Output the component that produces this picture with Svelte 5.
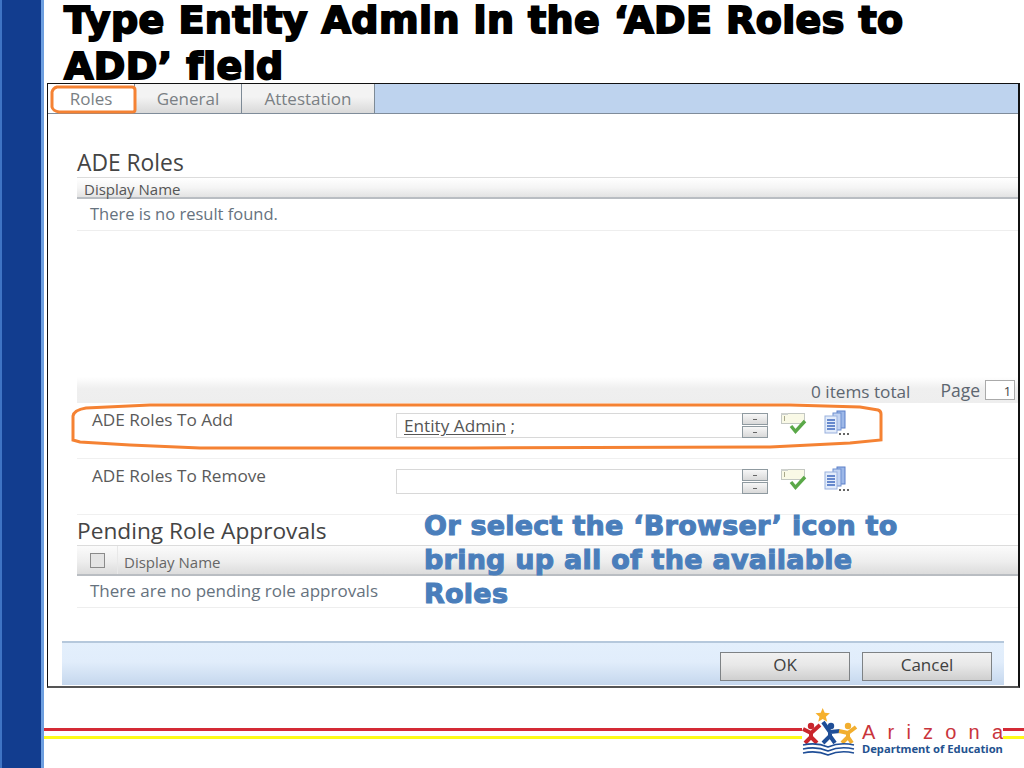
<script>
  const pendingCols = ['Display Name'];
</script>

{#snippet spinner()}
  <span class="spin">
    <span class="spin-btn"><i></i></span>
    <span class="spin-btn"><i></i></span>
  </span>
{/snippet}

{#snippet checkIcon()}
  <svg class="ico-check" width="26" height="24" viewBox="0 0 26 24" aria-hidden="true">
    <rect x="0.5" y="1.5" width="23" height="10" fill="#f9f9e6" stroke="#c4c8c2"/>
    <rect x="0" y="1" width="7" height="2" fill="#cfd2ce"/>
    <rect x="3" y="4" width="1" height="5" fill="#a9a98a"/>
    <path d="M10 14l4.5 5.5L24 9" fill="none" stroke="#5aa848" stroke-width="3.4"/>
  </svg>
{/snippet}

{#snippet browseIcon()}
  <svg class="ico-browse" width="27" height="26" viewBox="0 0 27 26" aria-hidden="true">
    <rect x="13" y="1" width="8" height="17" fill="#9db8e8" stroke="#5b7fc8"/>
    <rect x="9" y="3" width="8" height="17" fill="#c3d4f2" stroke="#6f8fd0"/>
    <rect x="1" y="6" width="12" height="17" fill="#e3ecfa" stroke="#9ab1de"/>
    <path d="M3 10h8M3 13h8M3 16h8M3 19h8" stroke="#3f68bf" stroke-width="1.4"/>
    <path d="M15 24h2M19 24h2M23 24h2" stroke="#666" stroke-width="2"/>
  </svg>
{/snippet}

<div class="slide">
  <aside class="side"></aside>
  <main class="main">
    <h1><span class="l1">Type Entity Admin in the ‘ADE Roles to</span><span class="l2">ADD’ field</span></h1>

    <section class="win">
      <nav class="tabs">
        <span class="tab active">Roles</span>
        <span class="tab general">General</span>
        <span class="tab attest">Attestation</span>
      </nav>

      <div class="body">
        <h2 class="h-roles">ADE Roles</h2>
        <div class="thead"><span>Display Name</span></div>
        <div class="trow first">There is no result found.</div>

        <div class="pager">
          <span class="total">0 items total</span>
          <span class="page">Page</span>
          <span class="pagebox">1</span>
        </div>

        <div class="field add">
          <span class="lbl">ADE Roles To Add</span>
          <div class="input"><span class="val"><u>Entity Admin </u> ;</span>{@render spinner()}</div>
          {@render checkIcon()}
          {@render browseIcon()}
        </div>
        <div class="field rem">
          <span class="lbl">ADE Roles To Remove</span>
          <div class="input"><span class="val"></span>{@render spinner()}</div>
          {@render checkIcon()}
          {@render browseIcon()}
        </div>

        <h2 class="h-pending">Pending Role Approvals</h2>
        <div class="thead tall">
          <span class="cbcell"><i class="cb"></i></span>
          {#each pendingCols as c}<span class="col">{c}</span>{/each}
        </div>
        <div class="trow">There are no pending role approvals</div>

        <footer class="foot">
          <button>OK</button>
          <button>Cancel</button>
        </footer>
      </div>

      <svg class="ring ring-tab" width="90" height="32" viewBox="0 0 90 32" aria-hidden="true">
        <path d="M8 3H83Q86 3 86 6V26Q86 28 83 28L10 28Q4 27 3 23V8Q4 4 8 3Z" fill="none" stroke="#f58233" stroke-width="3"/>
      </svg>
      <svg class="ring ring-add" width="816" height="50" viewBox="0 0 816 50" aria-hidden="true">
        <path d="M3 38L3 14Q4 8 16 6L80 3H720L790 5L808 8Q811 9 811 12V38L780 41L700 45L400 46H130L60 43L10 40Z" fill="none" stroke="#f58233" stroke-width="3"/>
      </svg>

      <p class="note">Or select the ‘Browser’ icon to<br />bring up all of the available<br />Roles</p>
    </section>

    <div class="rule-row">
      <div class="rule"></div>
      <div class="logo">
        <svg width="60" height="48" viewBox="0 0 60 48" aria-hidden="true">
          <path d="M20.7 0l2 4.8 5.2.5-4 3.4 1.3 5.1-4.5-2.7-4.5 2.7 1.3-5.1-4-3.4 5.2-.5z" fill="#f6b02c"/>
          <g fill="none" stroke-width="4" stroke-linejoin="round">
            <path d="M1 21l8 4 9-8M9 24v6M3 35l6-6 6 6" stroke="#c9252c"/>
            <path d="M38 23l-10 1-7-10M28 23v6M21 35l7-7 5 7" stroke="#1f4e97"/>
            <path d="M37 23l9 2 8-6M46 24v6M40 35l6-6 4 6" stroke="#f2ae2e"/>
          </g>
          <circle cx="9" cy="18" r="3.2" fill="#c9252c"/>
          <circle cx="29" cy="18" r="3.2" fill="#1f4e97"/>
          <circle cx="46" cy="18" r="3.2" fill="#f2ae2e"/>
          <path d="M1 37c9-2 18-1 25 2 7-3 17-4 26-2M1 41c9-2 18-1 25 2 7-3 17-4 26-2M1 45c9-2 18-1 25 2 7-3 17-4 26-2" fill="none" stroke="#1f4e97" stroke-width="1.6"/>
        </svg>
        <div class="logotxt">
          <div class="az">Arizona</div>
          <div class="dep">Department of Education</div>
        </div>
      </div>
      <div class="rule end"></div>
    </div>
  </main>
</div>

<style>
  :global(body) { margin: 0; background: #fff; }
  .slide { width: 1024px; height: 768px; display: flex; overflow: hidden; background: #fff; font-family: "Open Sans", "Noto Sans", sans-serif; }
  .side { width: 44px; flex: none; box-sizing: border-box; background: #123d8f; border-left: 2px solid #3f74c4; border-right: 3px solid #6d9fe0; }
  .main { flex: 1; min-width: 0; display: flex; flex-direction: column; }

  h1 { margin: 0 0 0 20px; height: 83px; font: bold 38px "DejaVu Sans", sans-serif; color: #000; -webkit-text-stroke: 1.9px #000; white-space: nowrap; letter-spacing: 0.4px; }
  .l1 { display: block; line-height: 40px; }
  .l2 { display: block; line-height: 34px; margin-top: 9px; }

  .win { position: relative; margin-left: 3px; width: 973px; height: 605px; flex: none; box-sizing: border-box; border: 1px solid #111; border-right-width: 2px; border-bottom: 2px solid #555; display: flex; flex-direction: column; background: #fff; }

  .tabs { height: 30px; flex: none; display: flex; background: #bed3ee; box-sizing: border-box; border-bottom: 1px solid #7f8c9a; }
  .tab { display: flex; align-items: center; justify-content: center; box-sizing: border-box; font-size: 17px; color: #7a7f84; background: linear-gradient(#f3f3f3, #f3f3f3 45%, #d9d9d9); border-right: 1px solid #7d8a96; }
  .tab.active { width: 87px; background: #fff; }
  .tab.general { width: 107px; }
  .tab.attest { width: 133px; }

  .body { flex: 1; display: flex; flex-direction: column; padding-left: 29px; min-height: 0; }
  h2 { margin: 0; font-weight: 400; color: #444; }
  .h-roles { font-size: 22.8px; line-height: 24px; margin: 37px 0 2px; }
  .h-pending { font-size: 22.7px; line-height: 28px; margin-top: 2px; }

  .thead { height: 22px; flex: none; box-sizing: border-box; display: flex; align-items: center; padding: 2px 0 0 7px; font-size: 15px; color: #555; background: linear-gradient(#fff, #f5f5f5 50%, #e3e3e3); border-top: 1px solid #dcdcdc; border-bottom: 2px solid #b9bdc2; }
  .thead.tall { height: 31px; padding: 0; background: linear-gradient(#fbfbfb, #eeeeee 55%, #dcdcdc); }
  .cbcell { width: 41px; height: 100%; display: flex; align-items: center; justify-content: center; border-right: 1px solid #e8e8e8; box-sizing: border-box; }
  .cb { display: block; width: 15px; height: 15px; box-sizing: border-box; border: 1px solid #8a8a8a; background: #e4e4e4; }
  .col { padding: 3px 0 0 6px; color: #666; font-size: 15px; }
  .trow { height: 32px; flex: none; box-sizing: border-box; padding-left: 13px; font-size: 17px; line-height: 30px; color: #66727e; border-bottom: 1px solid #eeeeee; white-space: nowrap; }
  .trow.first { font-size: 16.5px; }

  .pager { margin-top: 146px; height: 26px; flex: none; display: flex; align-items: center; font-size: 17.2px; color: #5d6670; background: linear-gradient(#fff, #efefef 45%, #eeeeee); }
  .total { margin-left: 734px; position: relative; top: 1px; }
  .page { margin-left: 30px; font-size: 17.5px; }
  .pagebox { margin-left: 5px; width: 30px; height: 20px; box-sizing: border-box; border: 1px solid #aaa; background: #fff; text-align: right; padding-right: 3px; font-size: 13px; line-height: 20px; color: #444; }

  .field { display: flex; flex: none; box-sizing: border-box; height: 56px; padding-left: 15px; padding-top: 10px; border-bottom: 1px solid #f0f0f0; }
  .lbl { width: 304px; font-size: 17.2px; line-height: 14px; color: #5a5a5a; white-space: nowrap; }
  .input { width: 372px; height: 25px; box-sizing: border-box; border: 1px solid #d8d8d8; display: flex; justify-content: space-between; background: #fff; }
  .val { font-size: 17.2px; line-height: 23px; padding-left: 7px; color: #555; }
  .val u { text-underline-offset: 2px; }
  .spin { width: 26px; display: flex; flex-direction: column; flex: none; gap: 1px; margin: -1px -1px -1px 0; }
  .spin-btn { flex: 1; display: flex; align-items: center; justify-content: center; background: linear-gradient(#f7f7f7, #d9d9d9); border: 1px solid #8f9aa0; box-sizing: border-box; }
  .spin-btn i { width: 4px; height: 1px; background: #666; }
  .ico-check { margin-left: 13px; flex: none; margin-top: -1px; }
  .ico-browse { margin-left: 17px; flex: none; margin-top: -3px; }

  .foot { margin: 33px 14px 1px -15px; flex: 1; box-sizing: border-box; border-top: 2px solid #b5c8dc; background: linear-gradient(#e3effc, #e1edfb 45%, #c5d7ed); display: flex; justify-content: flex-end; gap: 12px; padding: 9px 12px 0 0; }
  button { width: 130px; height: 29px; box-sizing: border-box; border: 1px solid #7e8285; background: linear-gradient(#f1f1f1, #e8e8e8 45%, #cfcfcf); font: 17px "Open Sans", sans-serif; color: #404040; padding: 0 0 4px; }

  .ring { position: absolute; pointer-events: none; }
  .ring-tab { left: 1px; top: 0; }
  .ring-add { left: 22px; top: 318px; }

  .note { position: absolute; left: 376px; top: 425px; margin: 0; font: bold 27px/34px "DejaVu Sans", sans-serif; color: #4a7ebb; -webkit-text-stroke: 1.1px #4a7ebb; white-space: nowrap; letter-spacing: 0.25px; }

  .rule-row { margin-top: 20px; display: flex; align-items: flex-start; }
  .rule { flex: 1; height: 11px; margin-top: 20px; box-sizing: border-box; border-top: 3px solid #d42a35; border-bottom: 3px solid #fdfb17; }
  .rule.end { flex: none; width: 21px; }
  .logo { width: 201px; display: flex; }
  .logo svg { flex: none; }
  .logotxt { margin-top: 14px; }
  .az { font: 20px/20px "Liberation Sans", sans-serif; color: #c9343c; letter-spacing: 12.2px; white-space: nowrap; width: 141px; }
  .dep { font: bold 11.2px/14px "Noto Sans", sans-serif; color: #24528f; white-space: nowrap; }
</style>
